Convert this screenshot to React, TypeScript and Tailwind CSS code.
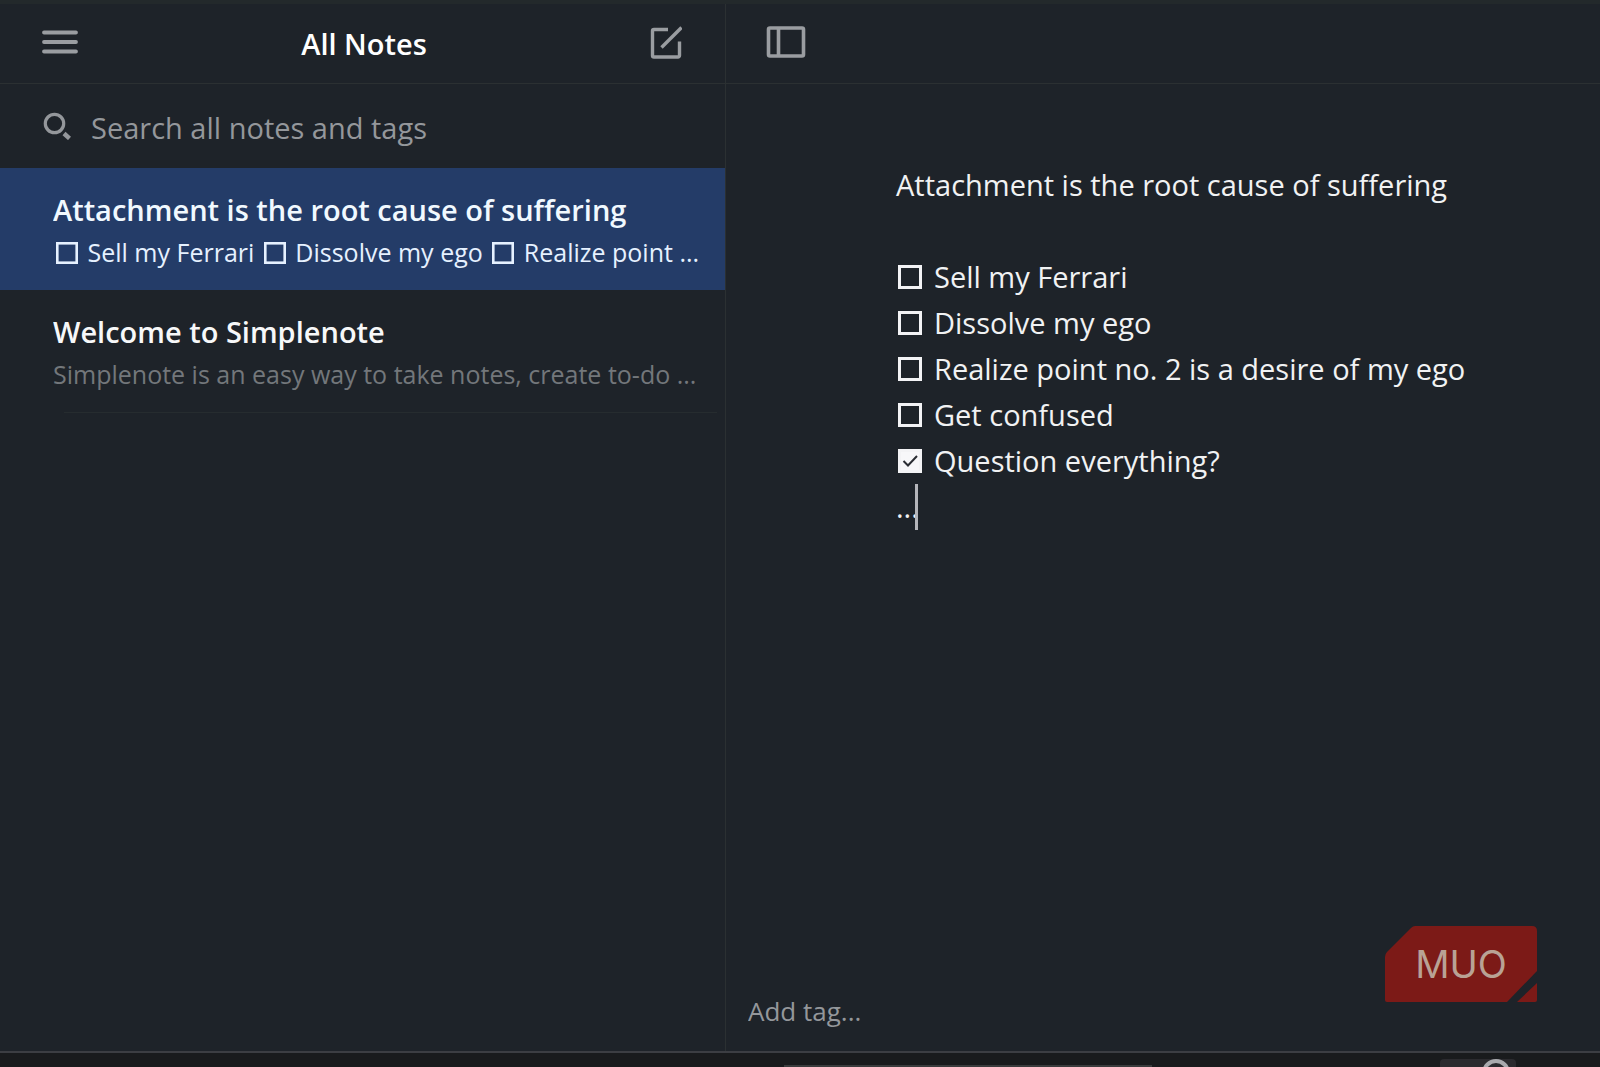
import { Fragment, useState } from "react";

type Task = { id: string; text: string; done: boolean };

const initialTasks: Task[] = [
  { id: "ferrari", text: "Sell my Ferrari", done: false },
  { id: "ego", text: "Dissolve my ego", done: false },
  { id: "desire", text: "Realize point no. 2 is a desire of my ego", done: false },
  { id: "confused", text: "Get confused", done: false },
  { id: "question", text: "Question everything?", done: true },
];

const previewTasks = ["Sell my Ferrari", "Dissolve my ego", "Realize point ..."];

function MenuIcon() {
  return (
    <svg viewBox="0 0 36 24" className="h-6 w-9" fill="none" stroke="currentColor" strokeWidth="3.8" strokeLinecap="round">
      <path d="M2 2.5h32M2 12h32M2 21.500h32" />
    </svg>
  );
}

function NewNoteIcon() {
  return (
    <svg viewBox="0 0 32 34" className="h-[34px] w-8" fill="none" stroke="currentColor" strokeWidth="3.4">
      <path d="M18 4.500H4a1.500 1.500 0 0 0-1.500 1.500v24.500A1.500 1.500 0 0 0 4 32h24a1.500 1.500 0 0 0 1.500-1.500V16.500" />
      <path d="M11.500 22.500 31.500 2.500" />
    </svg>
  );
}

function SidebarIcon() {
  return (
    <svg viewBox="0 0 40 32" className="h-8 w-10" fill="none" stroke="currentColor" strokeWidth="3.6">
      <rect x="2.500" y="2" width="35" height="28" rx="1.500" />
      <path d="M12.500 2v28" />
    </svg>
  );
}

function SearchIcon() {
  return (
    <svg viewBox="0 0 28 28" className="h-7 w-7" fill="none" stroke="currentColor">
      <circle cx="11.500" cy="11.500" r="9.200" strokeWidth="3.200" />
      <path d="m21 21.500 5.500 5" strokeWidth="4.400" />
    </svg>
  );
}

function EmptyBox() {
  return (
    <svg viewBox="0 0 22 22" className="mx-[3px] inline h-[22px] w-[22px] align-[-2px]" fill="none" stroke="currentColor" strokeWidth="2.600">
      <rect x="1.300" y="1.300" width="19.400" height="19.400" />
    </svg>
  );
}

function TaskRow({ task, onToggle }: { task: Task; onToggle: () => void }) {
  return (
    <li className="flex items-center gap-3 pl-[2px]">
      <span className="grid shrink-0">
        <input
          id={task.id}
          type="checkbox"
          checked={task.done}
          onChange={onToggle}
          className="col-start-1 row-start-1 h-6 w-6 appearance-none border-3 border-[#f3f3f5] checked:bg-[#f7f7f9]"
        />
        {task.done && (
          <svg viewBox="0 0 24 24" className="pointer-events-none col-start-1 row-start-1 h-6 w-6" fill="none" stroke="#2a2d33" strokeWidth="2">
            <path d="m5.500 12 4.500 4.500 9-9.500" />
          </svg>
        )}
      </span>
      <label htmlFor={task.id}>{task.text}</label>
    </li>
  );
}

function Sidebar() {
  return (
    <aside className="flex min-w-0 flex-col border-r border-[#2b3032]">
      <header className="flex h-20 items-center justify-between border-b border-[#2b3032] pr-[43px] pb-1 pl-[42px] text-[#9a9da1]">
        <button type="button" aria-label="Menu">
          <MenuIcon />
        </button>
        <h1 className="pt-1 text-[29px] font-semibold text-white">All Notes</h1>
        <button type="button" aria-label="New note">
          <NewNoteIcon />
        </button>
      </header>

      <div className="flex h-[84px] items-center gap-5 px-[43px] text-[#94979b]">
        <SearchIcon />
        <input
          type="text"
          aria-label="Search all notes and tags"
          placeholder="Search all notes and tags"
          className="min-w-0 flex-1 bg-transparent pt-1 text-[29px] outline-none placeholder:text-[#94979b]"
        />
      </div>

      <button type="button" className="h-[122px] bg-[#243c68] pt-1 pl-[53px] text-left text-[#e6f1ff]">
        <span className="block truncate text-[29px] leading-[42px] font-semibold text-[#f1f9ff]">
          Attachment is the root cause of suffering
        </span>
        <span className="block overflow-hidden text-[25px] leading-[42px] font-medium whitespace-nowrap">
          {previewTasks.map((text) => (
            <Fragment key={text}>
              <EmptyBox /> {text}{" "}
            </Fragment>
          ))}
        </span>
      </button>

      <button type="button" className="h-[122px] pt-1 pl-[53px] text-left">
        <span className="block truncate text-[29px] leading-[42px] font-semibold text-[#f7f8f9]">Welcome to Simplenote</span>
        <span className="block overflow-hidden text-[25px] leading-[42px] font-medium whitespace-nowrap text-[#73777b]">
          Simplenote is an easy way to take notes, create to-do ...
        </span>
      </button>
      <hr className="mr-2 ml-16 border-[#262c2f]" />
    </aside>
  );
}

function Watermark() {
  return (
    <div className="absolute right-[62px] bottom-12 grid h-[78px] w-[154px] place-items-center">
      <svg viewBox="0 0 154 78" className="col-start-1 row-start-1 h-full w-full" fill="#7c1a17">
        <path d="M31 1h117q5 0 5 5v40L123 77H3q-2 0-2-2V32Q1 29 3 27L27 3Q29 1 31 1z" />
        <path d="M153 58v17q0 2-2 2h-18z" />
      </svg>
      <span className="col-start-1 row-start-1 font-[Inter] text-[38px] leading-none text-[#b9a295]">MUO</span>
    </div>
  );
}

function Editor() {
  const [tasks, setTasks] = useState(initialTasks);

  const toggle = (id: string) =>
    setTasks((current) => current.map((task) => (task.id === id ? { ...task, done: !task.done } : task)));

  return (
    <main className="relative flex min-w-0 flex-col">
      <header className="flex h-20 items-center border-b border-[#2b3032] pb-1 pl-10 text-[#9a9da1]">
        <button type="button" aria-label="Toggle sidebar">
          <SidebarIcon />
        </button>
      </header>

      <article className="flex-1 pt-[78px] pl-[170px] text-[29px] leading-[46px] text-[#f1f2f3]">
        <h2>Attachment is the root cause of suffering</h2>
        <ul className="mt-[46px]">
          {tasks.map((task) => (
            <TaskRow key={task.id} task={task} onToggle={() => toggle(task.id)} />
          ))}
        </ul>
        <p className="flex">
          ...
          <span className="-ml-1 h-[46px] w-[3px] bg-[#b4b5ba]" />
        </p>
      </article>

      <footer className="flex h-20 items-center pl-[22px]">
        <input
          type="text"
          aria-label="Add tag"
          placeholder="Add tag..."
          className="w-full bg-transparent text-[26px] outline-none placeholder:text-[#94979b]"
        />
      </footer>
      <Watermark />
    </main>
  );
}

export default function App() {
  return (
    <div className="flex h-screen flex-col overflow-hidden bg-[#1e2329] font-['Open_Sans','Noto_Sans',sans-serif]">
      <div className="h-1 bg-[#23292b]" />
      <div className="grid min-h-0 flex-1 grid-cols-[363fr_437fr]">
        <Sidebar />
        <Editor />
      </div>
      <div className="flex h-4 items-end border-t-2 border-[#3c3e43] bg-[#191b1d]">
        <div className="mr-[18%] ml-[49%] h-[2px] flex-1 bg-[#3a3c3d]" />
        <div className="mr-[84px] flex h-2 w-[76px] justify-center overflow-hidden rounded-t bg-[#2b2b2f] pl-9">
          <span className="h-7 w-7 shrink-0 rounded-full border-4 border-[#a9aaae]" />
        </div>
      </div>
    </div>
  );
}
